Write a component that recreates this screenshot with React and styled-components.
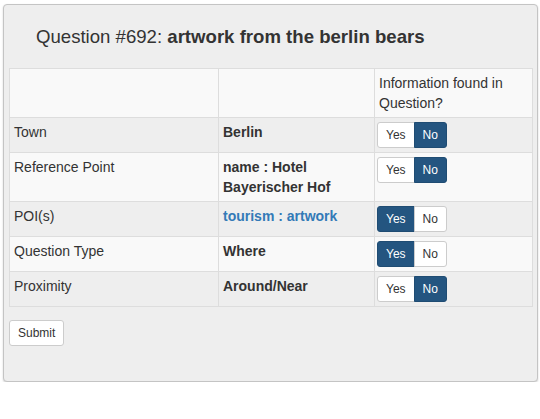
import styled, { createGlobalStyle } from 'styled-components'

const GlobalStyle = createGlobalStyle`
  body {
    margin: 0;
    background: #fff;
    font-family: "Liberation Sans", Arial, sans-serif;
    color: #333;
  }
`

const Well = styled.div`
  margin: 4px 0 0 3px;
  width: 535px;
  height: 378px;
  padding: 0 5px;
  background: #eeeeee;
  border: 1px solid #c4c4c4;
  border-radius: 4px;
  box-shadow: 0 1px 2px rgba(0, 0, 0, 0.18);
  box-sizing: border-box;
`

const Title = styled.h4`
  margin: 0;
  padding: 20px 0 0 27px;
  height: 63px;
  box-sizing: border-box;
  font-size: 18.6px;
  line-height: 24px;
  font-weight: normal;
  color: #333;
`

const Bold = styled.b`
  font-weight: bold;
`

const Table = styled.table`
  width: 523px;
  border-collapse: collapse;
  table-layout: fixed;
  font-size: 14px;
  line-height: 20px;
`

const Row = styled.tr`
  background: ${p => (p.$shade ? '#eeeeee' : '#f9f9f9')};
`

const Cell = styled.td`
  border: 1px solid #dddddd;
  padding: ${p => (p.$control ? '4px 2px' : '4px 5px 4px 4px')};
  vertical-align: top;
  text-align: left;
  font-weight: ${p => (p.$bold ? 'bold' : 'normal')};
  color: ${p => (p.$link ? '#337ab7' : '#333')};
`

const Group = styled.div`
  display: inline-flex;
`

const Toggle = styled.button`
  font-family: inherit;
  font-size: 12px;
  line-height: 16px;
  padding: 4px 8px;
  margin: 0;
  border: 1px solid ${p => (p.$on ? '#1f4c73' : '#cccccc')};
  background: ${p => (p.$on ? '#245580' : '#ffffff')};
  color: ${p => (p.$on ? '#ffffff' : '#333')};
  border-radius: ${p => (p.$first ? '3px 0 0 3px' : '0 3px 3px 0')};
  & + & {
    margin-left: -1px;
  }
`

const Footer = styled.div`
  padding-top: 13px;
`

const SubmitButton = styled.button`
  font-family: inherit;
  font-size: 12px;
  line-height: 16px;
  padding: 4px 8px;
  background: #fff;
  color: #333;
  border: 1px solid #cccccc;
  border-radius: 3px;
`

const rows = [
  { label: 'Town', value: 'Berlin', yes: false },
  { label: 'Reference Point', value: 'name : Hotel Bayerischer Hof', yes: false },
  { label: 'POI(s)', value: 'tourism : artwork', yes: true, link: true },
  { label: 'Question Type', value: 'Where', yes: true },
  { label: 'Proximity', value: 'Around/Near', yes: false },
]

function YesNo({ yes }) {
  return (
    <Group>
      <Toggle $first $on={yes}>Yes</Toggle>
      <Toggle $on={!yes}>No</Toggle>
    </Group>
  )
}

export default function App() {
  return (
    <>
      <GlobalStyle />
      <Well>
        <Title>
          Question #692: <Bold>artwork from the berlin bears</Bold>
        </Title>
        <Table>
          <colgroup>
            <col style={{ width: 209 }} />
            <col style={{ width: 156 }} />
            <col style={{ width: 158 }} />
          </colgroup>
          <thead>
            <Row>
              <Cell as="th"></Cell>
              <Cell as="th"></Cell>
              <Cell as="th">Information found in Question?</Cell>
            </Row>
          </thead>
          <tbody>
            {rows.map((r, i) => (
              <Row key={r.label} $shade={i % 2 === 0}>
                <Cell>{r.label}</Cell>
                <Cell $bold $link={r.link}>{r.value}</Cell>
                <Cell $control><YesNo yes={r.yes} /></Cell>
              </Row>
            ))}
          </tbody>
        </Table>
        <Footer>
          <SubmitButton>Submit</SubmitButton>
        </Footer>
      </Well>
    </>
  )
}
